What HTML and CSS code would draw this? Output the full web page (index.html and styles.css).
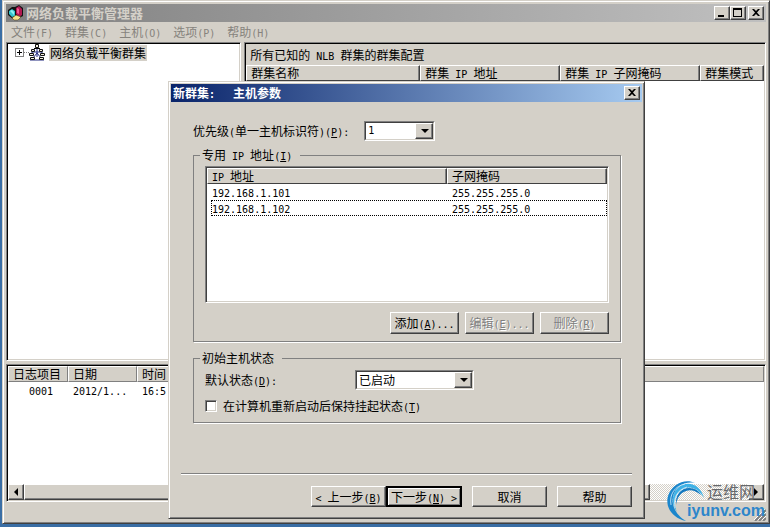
FILE: index.html
```html
<!DOCTYPE html>
<html lang="zh-CN">
<head>
<meta charset="utf-8">
<title>网络负载平衡管理器</title>
<link rel="stylesheet" href="styles.css">
</head>
<body>
<main class="window">
  <header class="titlebar">
    <svg class="app-icon" viewBox="0 0 16 16" aria-hidden="true">
      <path d="M0 5 4 2h4l1 9-4 3-5-4z" fill="#111"/>
      <path d="M1 6 4 4l3 2v5l-3 1-3-3z" fill="#35c5ce"/>
      <path d="M2 6l2-1 2 2v3z" fill="#8ff0f2"/>
      <path d="M7 2 11 0l4 3v8l-4 2-4-3z" fill="#111"/>
      <path d="M8 3l3-2 3 3v6l-3 2-3-3z" fill="#b01850"/>
      <path d="M9 3l2 1v5l-2-1z" fill="#f45a92"/>
      <path d="M4 13l4-3 5 2-3 3H6z" fill="#f6e38a" stroke="#4a3a10" stroke-width=".5"/>
    </svg>
    <h1 class="title">网络负载平衡管理器</h1>
    <div class="captions">
      <button class="cap" aria-label="最小化"><svg viewBox="0 0 12 10"><path d="M2 7h6v2H2z"/></svg></button>
      <button class="cap" aria-label="最大化"><svg viewBox="0 0 12 10"><path d="M1 0h9v9H1zM2 2v6h7V2z" fill-rule="evenodd"/></svg></button>
      <button class="cap cap-close" aria-label="关闭"><svg viewBox="0 0 12 10"><path d="M2 1h2l2 2 2-2h2L7 4.500l3 3.500H8L6 6 4 8H2l3-3.500z"/></svg></button>
    </div>
  </header>
  <nav class="menu">
    <a href="#file">文件<span class="en">(F)</span></a>
    <a href="#cluster">群集<span class="en">(C)</span></a>
    <a href="#host">主机<span class="en">(O)</span></a>
    <a href="#options">选项<span class="en">(P)</span></a>
    <a href="#help">帮助<span class="en">(H)</span></a>
  </nav>
  <div class="panes">
    <section class="pane tree">
      <div class="node">
        <button class="expander" aria-label="展开"><svg viewBox="0 0 7 7"><path d="M1 3h5v1H1zM3 1h1v5H3z"/></svg></button>
        <span class="branch"></span>
        <svg class="net-icon" viewBox="0 0 16 17" aria-hidden="true">
          <path d="M8 5v8M3 8h10M3 8v3M13 8v3M1 16h14M8 9l-4 5M8 9l4 5" stroke="#222a80" fill="none"/>
          <g fill="#f3f0dc" stroke="#111">
            <path d="M6.500.5h3v3h-3zM2.500 5.500h3v2h-3zM10.500 5.500h3v2h-3zM.5 9.500h4v2h-4zM11.500 9.500h4v2h-4zM1.500 13.500h4v2h-4zM10.500 13.500h4v2h-4z"/>
          </g>
          <path d="M5 4h6v1H5z"/>
        </svg>
        <span class="node-label">网络负载平衡群集</span>
      </div>
    </section>
    <section class="pane detail">
      <h2 class="caption">所有已知的<span class="en"> NLB </span>群集的群集配置</h2>
      <table class="grid">
        <colgroup><col class="c-name"><col class="c-ip"><col class="c-ip"><col></colgroup>
        <thead><tr>
          <th>群集名称</th><th>群集<span class="en"> IP </span>地址</th><th>群集<span class="en"> IP </span>子网掩码</th><th>群集模式</th>
        </tr></thead>
      </table>
    </section>
  </div>
  <section class="pane log">
    <table class="grid log-grid">
      <colgroup><col class="c-no"><col class="c-date"><col class="c-time"><col></colgroup>
      <thead><tr><th>日志项目</th><th>日期</th><th>时间</th><th></th></tr></thead>
      <tbody><tr><td class="num"><span class="en">0001</span></td><td><span class="en">2012/1...</span></td><td><span class="en">16:5</span></td><td></td></tr></tbody>
    </table>
    <div class="scroll">
      <button class="arrow" aria-label="向左滚动"><svg viewBox="0 0 8 8"><path d="M6 0v8L2 4z"/></svg></button>
      <div class="thumb"></div>
      <div class="track"></div>
      <button class="arrow" aria-label="向右滚动"><svg viewBox="0 0 8 8"><path d="M2 0v8l4-4z"/></svg></button>
    </div>
  </section>
  <footer class="status">
    <svg class="grip" viewBox="0 0 12 12" aria-hidden="true"><path d="M1 12 12 1M5 12l7-7M9 12l3-3" stroke="#808080" stroke-width="2"/><path d="M0 11 11 0M4 11l8-8M8 11l4-4" stroke="#fff"/></svg>
  </footer>

  <form class="dialog" role="dialog" aria-labelledby="dlg-title">
    <header class="titlebar dlg-bar">
      <h2 class="title" id="dlg-title">新群集<span class="en">:   </span>主机参数</h2>
      <button type="button" class="cap" aria-label="关闭"><svg viewBox="0 0 12 10"><path d="M2 1h2l2 2 2-2h2L7 4.500l3 3.500H8L6 6 4 8H2l3-3.500z"/></svg></button>
    </header>
    <div class="dlg-body">
      <div class="field priority">
        <label for="prio">优先级<span class="en">(</span>单一主机标识符<span class="en">)(<u>P</u>):</span></label>
        <span class="combo combo-s"><select id="prio" class="digits"><option>1</option></select></span>
      </div>
      <fieldset class="group ips">
        <legend>专用<span class="en"> IP </span>地址<span class="en">(<u>I</u>)</span></legend>
        <div class="list">
          <table class="grid ip-grid">
            <colgroup><col class="c-addr"><col></colgroup>
            <thead><tr><th><span class="en">IP </span>地址</th><th>子网掩码</th></tr></thead>
            <tbody>
              <tr><td><span class="en">192.168.1.101</span></td><td><span class="en">255.255.255.0</span></td></tr>
              <tr class="focused"><td><span class="en">192.168.1.102</span></td><td><span class="en">255.255.255.0</span></td></tr>
            </tbody>
          </table>
        </div>
        <div class="actions">
          <button type="button" class="btn">添加<span class="en">(<u>A</u>)...</span></button>
          <button type="button" class="btn" disabled>编辑<span class="en">(<u>E</u>)...</span></button>
          <button type="button" class="btn" disabled>删除<span class="en">(<u>R</u>)</span></button>
        </div>
      </fieldset>
      <fieldset class="group state">
        <legend>初始主机状态</legend>
        <div class="field">
          <label class="state-label" for="state">默认状态<span class="en">(<u>D</u>):</span></label>
          <span class="combo combo-l"><select id="state"><option>已启动</option></select></span>
        </div>
        <div class="field check">
          <input type="checkbox" id="keep"><label for="keep">在计算机重新启动后保持挂起状态<span class="en">(<u>T</u>)</span></label>
        </div>
      </fieldset>
      <div class="wizard">
        <div class="pair">
          <button type="button" class="btn"><span class="en">&lt; </span>上一步<span class="en">(<u>B</u>)</span></button>
          <button type="submit" class="btn default">下一步<span class="en">(<u>N</u>) &gt;</span></button>
        </div>
        <button type="button" class="btn">取消</button>
        <button type="button" class="btn">帮助</button>
      </div>
    </div>
  </form>

  <div class="mark">
    <svg class="swirl" viewBox="0 0 38 40" aria-hidden="true">
      <path d="M19 40C5 37-2 26 1 15 5 3 18-3 28 2 17 0 8 6 6 16c-2 9 4 19 13 24z" fill="#1b86cc"/>
      <path d="M10 31C3 22 5 9 15 4c9-4 19 1 22 13C32 8 25 5 18 7 9 10 5 20 10 31z" fill="#3fb2e6"/>
      <path d="M9 24C8 14 14 7 22 7c6 0 10 3 12 7-5-4-10-6-15-4-6 2-9 7-10 14z" fill="#1479c0"/>
      <path d="M4 24C2 13 8 5 18 3M8 27C6 17 10 9 20 6" fill="none" stroke="#d8f0fa" stroke-width=".8"/>
    </svg>
    <div class="mark-text"><span class="mark-cn">运维网</span><span class="mark-url">iyunv.com</span></div>
  </div>
</main>
</body>
</html>
```

FILE: styles.css
```css
:root {
  --face: #d4d0c8;
  --shade: #808080;
  --dark: #404040;
}

* { box-sizing: border-box; }

body {
  margin: 0;
  padding: 0 0 3px 2px;
  min-height: 100vh;
  display: flex;
  background: #3a6ea5;
  color: #000;
  font: 12px/16px "Noto Sans CJK SC", sans-serif;
  white-space: nowrap;
}

h1, h2 { margin: 0; font-size: 12px; line-height: 16px; font-weight: 400; }
button, select { font: inherit; color: inherit; border-radius: 0; }
svg { display: block; }

.en {
  font-family: "DejaVu Sans Mono", monospace;
  font-size: 10px;
  line-height: 0;
  white-space: pre;
}

.window {
  position: relative;
  flex: 1;
  display: flex;
  flex-direction: column;
  padding: 2px 3px 0 2px;
  background: var(--face);
  border: 1px solid;
  border-color: var(--face) var(--dark) var(--dark) var(--face);
  box-shadow: inset 1px 1px #fff, inset -1px -1px var(--shade);
}

/* Title bars */
.titlebar {
  display: flex;
  align-items: center;
  height: 18px;
  margin-top: 1px;
  margin-left: 1px;
  padding: 0 2px;
  background: linear-gradient(90deg, #808080, #c0c0c0);
  color: #d4d0c8;
}
.title { flex: 1; font-weight: 700; }
.app-icon { width: 16px; height: 16px; margin-right: 2px; }
.window > .titlebar .title { font-size: 13px; }
.captions { display: flex; }
.cap {
  width: 16px;
  height: 14px;
  padding: 1px;
  background: var(--face);
  color: #000;
  border: 1px solid;
  border-color: #fff var(--dark) var(--dark) #fff;
  box-shadow: inset -1px -1px var(--shade);
}
.cap svg { width: 12px; height: 10px; }
.cap-close { margin-left: 2px; }

.menu {
  display: flex;
  gap: 12px;
  height: 20px;
  padding: 2px 6px;
}
.menu a { color: #86837d; text-decoration: none; }

/* Panes */
.pane {
  background: #fff;
  border: 1px solid;
  border-color: var(--shade) #fff #fff var(--shade);
  box-shadow: inset 1px 1px #000, inset -1px -1px var(--face);
  padding: 1px;
  min-width: 0;
}
.panes {
  flex: 322 1 0;
  display: grid;
  grid-template-columns: 235fr 521fr;
  gap: 3px;
  margin-left: 1px;
}
.node { display: flex; align-items: center; padding-left: 7px; }
.expander {
  width: 9px;
  height: 9px;
  padding: 0;
  border: 1px solid var(--shade);
  background: #fff;
}
.expander svg { width: 7px; height: 7px; }
.branch { width: 5px; border-top: 1px dotted var(--shade); }
.net-icon { width: 16px; height: 17px; margin-right: 4px; }
.node-label { padding: 0 1px; background: var(--face); }

.caption { height: 21px; padding: 3px 4px; background: var(--face); }
.detail { overflow: hidden; }

/* Report-style tables */
.grid { width: 100%; table-layout: fixed; border-collapse: separate; border-spacing: 0; }
.grid th {
  height: 16px;
  padding: 0 4px;
  line-height: 14px;
  font-weight: 400;
  text-align: left;
  background: var(--face);
  border: 1px solid;
  border-color: #fff var(--dark) var(--dark) #fff;
  box-shadow: inset -1px 0 var(--shade);
}
.grid td { height: 16px; padding: 0 5px; line-height: 14px; }
.c-name { width: 174px; }
.c-ip { width: 140px; }
.c-no { width: 60px; }
.c-date { width: 69px; }
.c-time { width: 80px; }
.c-addr { width: 240px; }
.grid .num { text-align: right; padding-right: 15px; }
.log-grid th { border-color: #fff var(--shade) var(--shade) #fff; box-shadow: none; }

.log {
  flex: 135 1 0;
  display: flex;
  flex-direction: column;
  margin: 3px 0 0 1px;
}
.scroll { display: flex; height: 16px; margin-top: auto; }
.arrow, .thumb {
  background: var(--face);
  border: 1px solid;
  border-color: #fff var(--dark) var(--dark) #fff;
  box-shadow: inset -1px -1px var(--shade);
}
.arrow { width: 16px; padding: 3px; }
.arrow svg { width: 8px; height: 8px; }
.thumb { flex: 626; }
.track { flex: 98; background: repeating-conic-gradient(#fff 0 25%, var(--face) 0 50%) 0 0 / 2px 2px; }

.status { height: 21px; display: flex; justify-content: flex-end; align-items: flex-end; padding-bottom: 2px; }
.grip { width: 12px; height: 12px; }

/* Dialog */
.dialog {
  position: absolute;
  top: 80px;
  left: 165px;
  right: 124px;
  padding: 2px;
  background: var(--face);
  border: 1px solid;
  border-color: var(--face) var(--dark) var(--dark) var(--face);
  box-shadow: inset 1px 1px #fff, inset -1px -1px var(--shade);
}
.dlg-bar { margin: 0; background: linear-gradient(90deg, #0a246a, #a6caf0); color: #fff; }
.dlg-body { padding: 19px 10px 9px; }
.field { display: flex; align-items: center; }
.priority { padding-left: 12px; }
.priority .combo { margin-left: 15px; }

.combo {
  position: relative;
  display: flex;
  height: 20px;
  border: 1px solid;
  border-color: var(--shade) #fff #fff var(--shade);
}
.combo-s { width: 71px; }
.combo-l { width: 119px; }
.combo select {
  appearance: none;
  width: 100%;
  padding: 0 2px;
  background: #fff;
  border: 1px solid;
  border-color: var(--dark) var(--face) var(--face) var(--dark);
  outline: 0;
}
.combo .digits { font: 10px/14px "DejaVu Sans Mono", monospace; }
.combo::before {
  content: "";
  position: absolute;
  top: 1px;
  right: 1px;
  bottom: 1px;
  width: 16px;
  background: var(--face);
  border: 1px solid;
  border-color: #fff var(--dark) var(--dark) #fff;
  box-shadow: inset -1px -1px var(--shade);
  pointer-events: none;
}
.combo::after {
  content: "";
  position: absolute;
  top: 7px;
  right: 5px;
  border: 4px solid transparent;
  border-top-color: #000;
  border-bottom: 0;
  pointer-events: none;
}

.group {
  margin: 0 11px 0 12px;
  min-width: 0;
  padding: 0 11px;
  border: 1px solid var(--shade);
  box-shadow: 1px 1px #fff;
}
.group legend { padding: 0 8px 0 2px; margin-left: -5px; height: 16px; }
.ips { margin-top: 6px; padding-bottom: 7px; }
.list {
  height: 137px;
  margin-top: 3px;
  padding: 1px;
  background: #fff;
  border: 1px solid;
  border-color: var(--shade) #fff #fff var(--shade);
  box-shadow: inset 1px 1px var(--dark), inset -1px -1px var(--face);
}
.focused { position: relative; }
.focused td:last-child::after {
  content: "";
  position: absolute;
  inset: 0 0 0 4px;
  border: 1px dotted #000;
  pointer-events: none;
}

.btn {
  width: 75px;
  height: 21px;
  padding: 0;
  line-height: 16px;
  background: var(--face);
  border: 1px solid;
  border-color: #fff var(--dark) var(--dark) #fff;
  box-shadow: inset -1px -1px var(--shade);
}
.btn:disabled { color: var(--shade); text-shadow: 1px 1px #fff; }
.actions { display: flex; justify-content: flex-end; gap: 6px; margin-top: 9px; }
.actions .btn { width: 69px; height: 22px; }
.default { width: 76px; border: 2px solid #000; box-shadow: inset 1px 1px #fff, inset -1px -1px var(--shade); }

.state { margin-top: 8px; padding-bottom: 8px; }
.state legend + .field { padding-top: 4px; }
.state-label { width: 150px; }
.check { gap: 6px; margin-top: 8px; }
.check input {
  appearance: none;
  width: 12px;
  height: 12px;
  margin: 0;
  background: #fff;
  border: 1px solid;
  border-color: var(--shade) #fff #fff var(--shade);
  box-shadow: inset 1px 1px var(--dark), inset -1px -1px var(--face);
}

.wizard {
  display: flex;
  justify-content: flex-end;
  gap: 10px;
  margin-top: 50px;
  padding-top: 12px;
  border-top: 1px solid var(--shade);
  box-shadow: inset 0 1px #fff;
}
.pair { display: flex; }

/* Watermark */
.mark { position: absolute; right: 4px; bottom: 2px; display: flex; pointer-events: none; }
.swirl { width: 38px; height: 40px; margin-right: -18px; }
.mark-text { display: flex; flex-direction: column; font-family: "Noto Sans CJK SC", sans-serif; }
.mark-cn { padding-left: 20px; font-size: 16px; line-height: 20px; color: #66686c; }
.mark-url { font: 700 16px/20px "Liberation Sans", sans-serif; color: #2d86cb; }
```
